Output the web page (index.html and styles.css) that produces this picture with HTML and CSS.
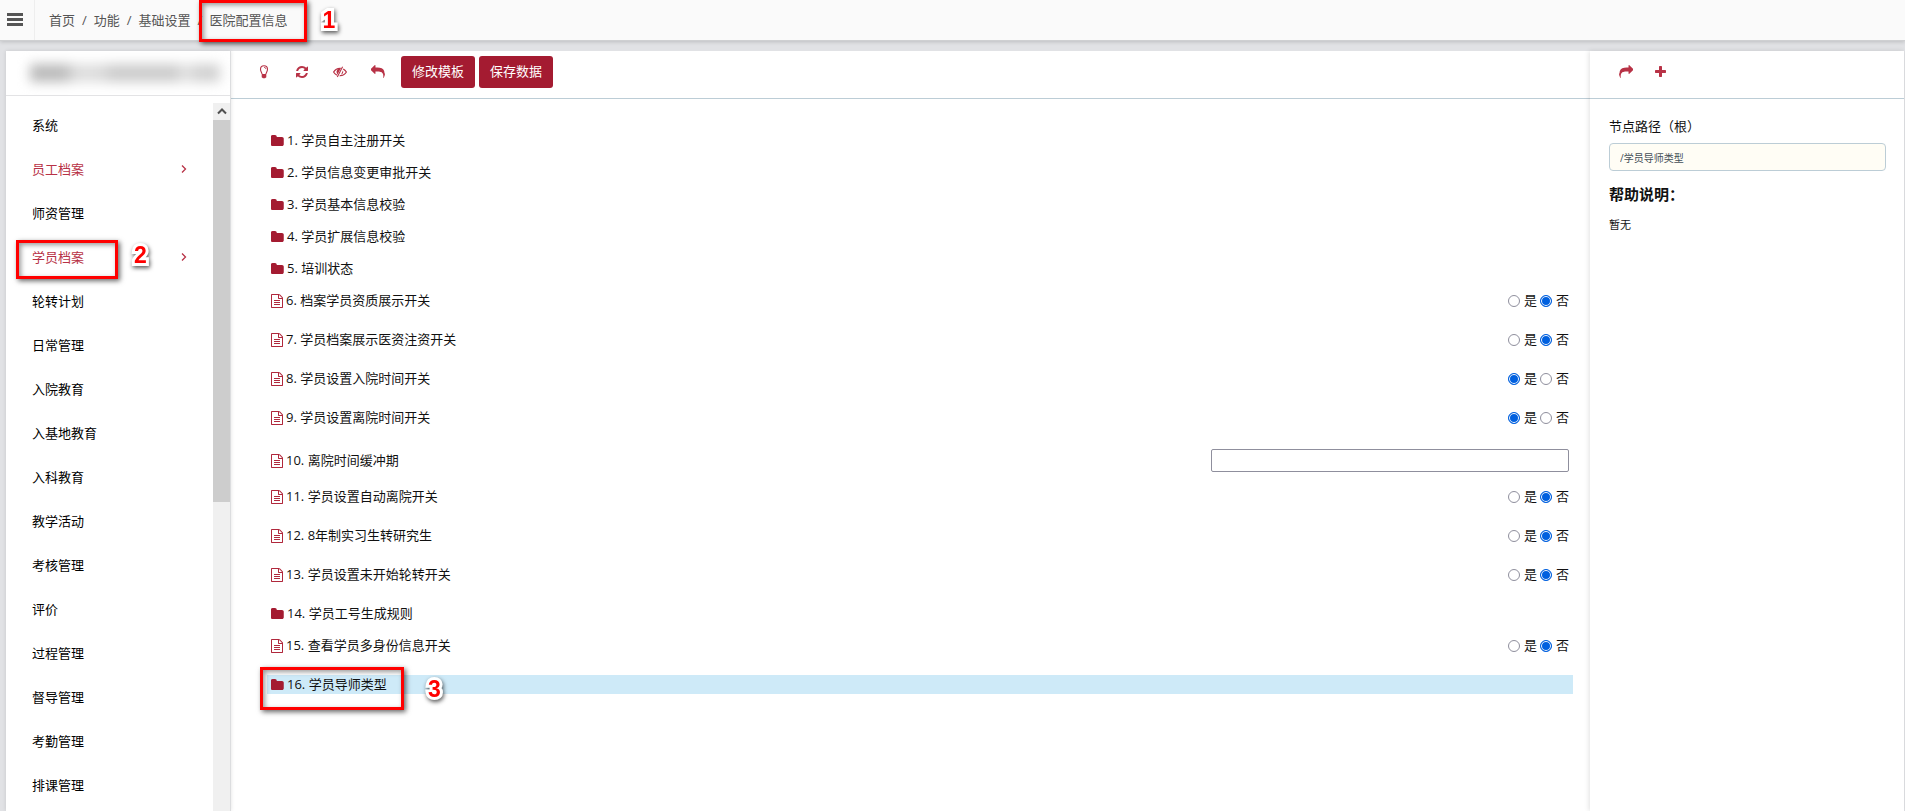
FILE: index.html
```html
<!DOCTYPE html>
<html lang="zh-CN">
<head>
<meta charset="utf-8">
<title>医院配置信息</title>
<link rel="stylesheet" href="styles.css">
</head>
<body>
<svg class="sprite" aria-hidden="true">
  <symbol id="bars" viewBox="0 0 16 14"><path d="M0 0h16v3H0zM0 5h16v3H0zM0 10h16v3H0z"/></symbol>
  <symbol id="folder" viewBox="128 128 1600 1408"><path d="M1728 608v704q0 92-66 158t-158 66h-1216q-92 0-158-66t-66-158v-960q0-92 66-158t158-66h320q92 0 158 66t66 158v32h672q92 0 158 66t66 158z"/></symbol>
  <symbol id="file" viewBox="128 0 1536 1792"><path d="M1596 380q28 28 48 76t20 88v1152q0 40-28 68t-68 28h-1344q-40 0-68-28t-28-68v-1600q0-40 28-68t68-28h896q40 0 88 20t76 48zm-444-244v376h376q-10-29-22-41l-313-313q-12-12-41-22zm384 1528v-1024h-416q-40 0-68-28t-28-68v-416h-768v1536h1280zm-1024-864q0-14 9-23t23-9h704q14 0 23 9t9 23v64q0 14-9 23t-23 9h-704q-14 0-23-9t-9-23v-64zm736 224q14 0 23 9t9 23v64q0 14-9 23t-23 9h-704q-14 0-23-9t-9-23v-64q0-14 9-23t23-9h704zm0 256q14 0 23 9t9 23v64q0 14-9 23t-23 9h-704q-14 0-23-9t-9-23v-64q0-14 9-23t23-9h704z"/></symbol>
  <symbol id="refresh" viewBox="0 0 1792 1792"><path d="M1639 1056q0 5-1 7-64 268-268 434.5t-478 166.500q-146 0-282.500-55t-243.500-157l-129 129q-19 19-45 19t-45-19-19-45v-448q0-26 19-45t45-19h448q26 0 45 19t19 45-19 45l-137 137q71 66 161 102t187 36q134 0 250-65t186-179q11-17 53-117 8-23 30-23h192q13 0 22.500 9.500t9.500 22.500zm25-800v448q0 26-19 45t-45 19h-448q-26 0-45-19t-19-45 19-45l138-138q-148-137-349-137-134 0-250 65t-186 179q-11 17-53 117-8 23-30 23h-199q-13 0-22.500-9.500t-9.500-22.500v-7q65-268 270-434.500t480-166.500q146 0 284 55.500t245 156.500l130-129q19-19 45-19t45 19 19 45z"/></symbol>
  <symbol id="reply" viewBox="0 0 1792 1792"><path d="M1792 1120q0 166-127 451-3 7-10.500 24t-13.500 30-13 22q-12 17-28 17-15 0-23.500-10t-8.500-25q0-9 2.500-26.500t2.500-23.500q5-68 5-123 0-112-19.500-200.500t-54-153.500-89-112-117.500-80-146.500-48.500-167-24.500-188.500-7h-224v256q0 26-19 45t-45 19-45-19l-512-512q-19-19-19-45t19-45l512-512q19-19 45-19t45 19 19 45v256h224q713 0 875 403 53 134 53 333z"/></symbol>
  <symbol id="plus" viewBox="192 128 1408 1408"><path d="M1600 736v192q0 40-28 68t-68 28h-416v416q0 40-28 68t-68 28h-192q-40 0-68-28t-28-68v-416h-416q-40 0-68-28t-28-68v-192q0-40 28-68t68-28h416v-416q0-40 28-68t68-28h192q40 0 68 28t28 68v416h416q40 0 68 28t28 68z"/></symbol>
  <symbol id="bulb" viewBox="0 0 14 14"><path d="M5 9C5 7.500 3.500 6.600 3.500 4.300a3.500 3.500 0 0 1 7 0C10.500 6.600 9 7.500 9 9" fill="none" stroke="currentColor" stroke-width="1.100"/><path d="M7 2.300a2 2 0 0 1 2 1.800" fill="none" stroke="currentColor" stroke-width=".8"/><path d="M4.700 9h4.600v3.300L8 13.300H6l-1.300-1z"/></symbol>
  <symbol id="eye" viewBox="0 0 14 14"><path d="M.6 7C2 4.700 4.300 3.300 7 3.300S12 4.700 13.400 7C12 9.300 9.700 10.700 7 10.700S2 9.300.6 7z" fill="none" stroke="currentColor" stroke-width="1.200"/><path d="M4 5.200a3.200 3.200 0 0 0 1.400 4.600L8.600 4A3.200 3.200 0 0 0 4 5.200zM10 5.200c.6 2 0 3.600-2 4.500z"/><path d="M10 1.800L4.600 12" fill="none" stroke="#fff" stroke-width="2.400"/><path d="M9.600 1.800L4.300 12" fill="none" stroke="currentColor" stroke-width="1.100"/></symbol>
  <symbol id="chevron" viewBox="0 0 6 10"><path d="M1 1.500L4.500 5 1 8.500" fill="none" stroke="currentColor" stroke-width="1.300"/></symbol>
  <symbol id="up" viewBox="0 0 10 7"><path d="M1 5.500L5 1.500l4 4" fill="none" stroke="currentColor" stroke-width="2"/></symbol>
</svg>

<header class="topbar">
  <button class="menu-toggle" type="button" aria-label="菜单"><svg class="icon-bars"><use href="#bars"/></svg></button>
  <nav class="breadcrumb" aria-label="路径">
    <a href="#">首页</a><span>/</span><a href="#">功能</a><span>/</span><a href="#">基础设置</a><span>/</span>
    <span class="current">医院配置信息<i class="mark mark-crumb"></i><b class="num num-crumb">1</b></span>
  </nav>
</header>

<div class="layout">
  <aside class="sidebar">
    <div class="org"><div class="org-name"></div></div>
    <div class="side-body">
      <nav class="side-nav">
        <a href="#">系统</a>
        <a href="#" class="parent">员工档案<svg class="icon-chevron"><use href="#chevron"/></svg></a>
        <a href="#">师资管理</a>
        <a href="#" class="parent">学员档案<svg class="icon-chevron"><use href="#chevron"/></svg><i class="mark mark-side"></i><b class="num num-side">2</b></a>
        <a href="#">轮转计划</a>
        <a href="#">日常管理</a>
        <a href="#">入院教育</a>
        <a href="#">入基地教育</a>
        <a href="#">入科教育</a>
        <a href="#">教学活动</a>
        <a href="#">考核管理</a>
        <a href="#">评价</a>
        <a href="#">过程管理</a>
        <a href="#">督导管理</a>
        <a href="#">考勤管理</a>
        <a href="#">排课管理</a>
      </nav>
      <div class="scrollbar"><div class="scroll-up"><svg class="icon-up"><use href="#up"/></svg></div><div class="scroll-thumb"></div></div>
    </div>
  </aside>

  <main class="main">
    <div class="toolbar">
      <button class="tool" type="button" aria-label="提示"><svg class="icon"><use href="#bulb"/></svg></button>
      <button class="tool" type="button" aria-label="刷新"><svg class="icon"><use href="#refresh"/></svg></button>
      <button class="tool" type="button" aria-label="隐藏"><svg class="icon"><use href="#eye"/></svg></button>
      <button class="tool" type="button" aria-label="返回"><svg class="icon"><use href="#reply"/></svg></button>
      <div class="actions">
        <button class="btn" type="button">修改模板</button>
        <button class="btn" type="button">保存数据</button>
      </div>
    </div>
    <ul class="tree">
      <li class="row"><svg class="icon-folder"><use href="#folder"/></svg><span>1. 学员自主注册开关</span></li>
      <li class="row"><svg class="icon-folder"><use href="#folder"/></svg><span>2. 学员信息变更审批开关</span></li>
      <li class="row"><svg class="icon-folder"><use href="#folder"/></svg><span>3. 学员基本信息校验</span></li>
      <li class="row"><svg class="icon-folder"><use href="#folder"/></svg><span>4. 学员扩展信息校验</span></li>
      <li class="row"><svg class="icon-folder"><use href="#folder"/></svg><span>5. 培训状态</span></li>
      <li class="row option"><svg class="icon-file"><use href="#file"/></svg><span>6. 档案学员资质展示开关</span><div class="choice"><label><input type="radio" name="r6">是</label><label><input type="radio" name="r6" checked>否</label></div></li>
      <li class="row option"><svg class="icon-file"><use href="#file"/></svg><span>7. 学员档案展示医资注资开关</span><div class="choice"><label><input type="radio" name="r7">是</label><label><input type="radio" name="r7" checked>否</label></div></li>
      <li class="row option"><svg class="icon-file"><use href="#file"/></svg><span>8. 学员设置入院时间开关</span><div class="choice"><label><input type="radio" name="r8" checked>是</label><label><input type="radio" name="r8">否</label></div></li>
      <li class="row option"><svg class="icon-file"><use href="#file"/></svg><span>9. 学员设置离院时间开关</span><div class="choice"><label><input type="radio" name="r9" checked>是</label><label><input type="radio" name="r9">否</label></div></li>
      <li class="row field"><svg class="icon-file"><use href="#file"/></svg><label for="buffer">10. 离院时间缓冲期</label><input class="text" id="buffer" type="text"></li>
      <li class="row option"><svg class="icon-file"><use href="#file"/></svg><span>11. 学员设置自动离院开关</span><div class="choice"><label><input type="radio" name="r11">是</label><label><input type="radio" name="r11" checked>否</label></div></li>
      <li class="row option"><svg class="icon-file"><use href="#file"/></svg><span>12. 8年制实习生转研究生</span><div class="choice"><label><input type="radio" name="r12">是</label><label><input type="radio" name="r12" checked>否</label></div></li>
      <li class="row option"><svg class="icon-file"><use href="#file"/></svg><span>13. 学员设置未开始轮转开关</span><div class="choice"><label><input type="radio" name="r13">是</label><label><input type="radio" name="r13" checked>否</label></div></li>
      <li class="row"><svg class="icon-folder"><use href="#folder"/></svg><span>14. 学员工号生成规则</span></li>
      <li class="row option"><svg class="icon-file"><use href="#file"/></svg><span>15. 查看学员多身份信息开关</span><div class="choice"><label><input type="radio" name="r15">是</label><label><input type="radio" name="r15" checked>否</label></div></li>
      <li class="row selected"><svg class="icon-folder"><use href="#folder"/></svg><span>16. 学员导师类型</span><i class="mark mark-row"></i><b class="num num-row">3</b></li>
    </ul>
  </main>

  <aside class="detail">
    <div class="toolbar detail-tools">
      <button class="tool" type="button" aria-label="转发"><svg class="icon flip"><use href="#reply"/></svg></button>
      <button class="tool" type="button" aria-label="新增"><svg class="icon-plus"><use href="#plus"/></svg></button>
    </div>
    <div class="detail-body">
      <label for="path">节点路径（根）</label>
      <input class="path" id="path" type="text" value="/学员导师类型" readonly>
      <h2>帮助说明：</h2>
      <p>暂无</p>
    </div>
  </aside>
</div>
</body>
</html>
```

FILE: styles.css
```css
* { box-sizing: border-box; }

body {
  margin: 0;
  height: 100vh;
  overflow: hidden;
  display: flex;
  flex-direction: column;
  background: #e1e2e5;
  color: #111;
  font: 13px/19px "Open Sans", "Noto Sans CJK SC", sans-serif;
}

button, input { font: inherit; }
a { color: inherit; text-decoration: none; }
svg { fill: currentColor; flex: none; display: block; }
.sprite { position: absolute; width: 0; height: 0; }

.topbar {
  flex: none;
  height: 41px;
  display: flex;
  background: #fafafa;
  border-bottom: 1px solid #cfd0d2;
  box-shadow: 0 1px 4px rgba(0, 0, 0, .16);
  color: #555;
}
.menu-toggle {
  width: 35px;
  padding: 0 0 0 7px;
  border: 0;
  border-right: 1px solid #eee;
  background: none;
  color: #555;
}
.icon-bars { width: 16px; height: 14px; }
.breadcrumb { display: flex; align-items: center; gap: 7px; padding-left: 14px; }
.current { position: relative; }

.layout {
  flex: 1;
  min-height: 0;
  display: flex;
  margin: 10px 1px 0 6px;
  background: #fff;
}

.sidebar {
  position: relative;
  flex: none;
  width: 225px;
  display: flex;
  flex-direction: column;
  border-right: 1px solid #dcdddf;
  box-shadow: 0 0 4px rgba(0, 0, 0, .12);
}
.org {
  flex: none;
  height: 45px;
  padding: 13px 10px 0 24px;
  border-bottom: 1px solid #e3e3e5;
  overflow: hidden;
}
.org-name {
  height: 18px;
  background: linear-gradient(90deg, #bbb 0 18%, #ddd 24% 36%, #ccc 44% 76%, #e4e4e4 82%, #d2d2d2 88% 100%);
  filter: blur(6px);
}
.side-body { flex: 1; min-height: 0; display: flex; padding-top: 7px; }
.side-nav { flex: 1; color: #000; }
.side-nav a {
  position: relative;
  height: 44px;
  display: flex;
  align-items: center;
  justify-content: space-between;
  padding: 0 26px;
}
.side-nav .parent { color: #b83246; }
.icon-chevron { width: 6px; height: 10px; }
.scrollbar { width: 17px; background: #f0f0f0; }
.scroll-up { height: 17px; display: grid; place-items: center; color: #505050; }
.icon-up { width: 10px; height: 7px; }
.scroll-thumb { height: 54%; background: #cdcdcd; }

.main { flex: 1; min-width: 0; }
.toolbar {
  height: 48px;
  display: flex;
  align-items: center;
  gap: 24px;
  padding: 5px 0 11px 26px;
  border-bottom: 1px solid #bccdd6;
  color: #b83246;
}
.tool { padding: 0; border: 0; background: none; color: inherit; }
.icon { width: 14px; height: 14px; }
.icon-plus { width: 11px; height: 11px; }
.flip { transform: scaleX(-1); }
.actions { display: flex; gap: 4px; margin-left: -8px; }
.btn {
  height: 32px;
  padding: 0 11px;
  border: 0;
  border-radius: 3px;
  background: #a41b31;
  color: #fff;
}

.tree { list-style: none; margin: 0; padding: 32px 17px 0 36px; }
.row {
  position: relative;
  height: 19px;
  margin-bottom: 13px;
  display: flex;
  align-items: center;
  gap: 3px;
  padding: 0 4px;
}
.option { align-items: flex-start; height: 26px; }
.field { height: 27px; }
.selected { background: #ceeaf8; }
.icon-folder { width: 13px; height: 11px; color: #a41b31; }
.icon-file { width: 12px; height: 14px; color: #b0283c; }
.option .icon-file { margin-top: 3px; }
.choice { margin-left: auto; display: flex; gap: 3px; }
.choice label { display: flex; align-items: center; gap: 4px; }
.choice input {
  appearance: none;
  width: 12px;
  height: 12px;
  margin: 0;
  border: 1px solid #8f8f9d;
  border-radius: 50%;
  background: #fff;
}
.choice input:checked {
  border-color: #0060df;
  background: #0060df;
  box-shadow: inset 0 0 0 1px #fff;
}
.text {
  width: 358px;
  height: 23px;
  margin-left: auto;
  border: 1px solid #8f8f9d;
  border-radius: 2px;
  background: #fff;
}

.detail {
  flex: none;
  width: 314px;
  box-shadow: -1px 0 5px rgba(0, 0, 0, .12);
}
.detail-tools { padding-left: 29px; gap: 22px; }
.detail-body { padding: 18px 18px 0 19px; }
.detail-body label { display: block; }
.path {
  display: block;
  width: 100%;
  height: 28px;
  margin-top: 7px;
  padding: 0 10px;
  border: 1px solid #bccdd6;
  border-radius: 4px;
  background: #fffdf5;
  color: #444f58;
  font-size: 10px;
}
.detail-body h2 { margin: 12px 0 0; font-size: 15px; line-height: 22px; font-weight: 700; }
.detail-body p { margin: 10px 0 0; font-size: 11px; }

/* numbered callouts */
.mark {
  position: absolute;
  border: 3px solid #f00;
  box-shadow: 2px 2px 5px rgba(0, 0, 0, .6), inset 2px 2px 5px rgba(0, 0, 0, .4);
  z-index: 2;
}
.num {
  position: absolute;
  z-index: 2;
  color: #f00;
  font: 700 23px/24px "Liberation Sans", sans-serif;
  -webkit-text-stroke: 6px #fff;
  paint-order: stroke fill;
  filter: drop-shadow(1px 2px 2px rgba(0, 0, 0, .65));
}
.mark-crumb { left: -10px; top: -11px; width: 108px; height: 42px; }
.num-crumb { left: 113px; top: -3px; }
.mark-side { left: 10px; top: 5px; width: 102px; height: 39px; }
.num-side { left: 128px; top: 8px; }
.mark-row { left: -7px; top: -8px; width: 144px; height: 43px; }
.num-row { left: 161px; top: 2px; }
```
